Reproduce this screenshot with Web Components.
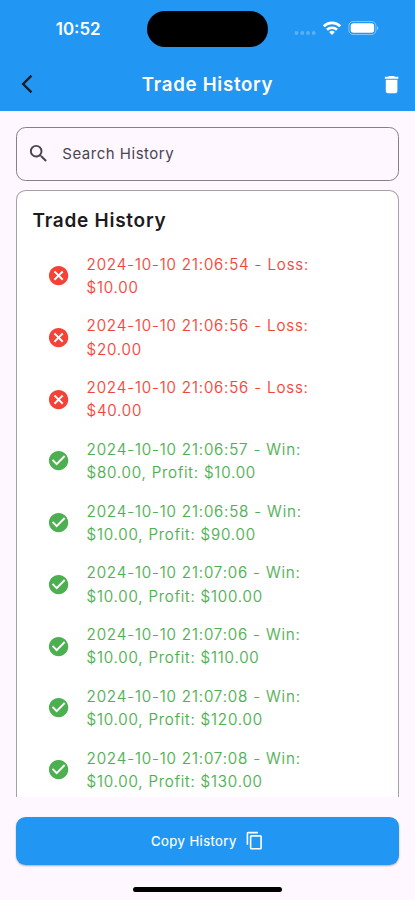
<!DOCTYPE html>
<html lang="en">
<head>
<meta charset="utf-8">
<title>Trade History</title>
<style>
html,body{margin:0;height:100%}
body{font-family:Inter,"Liberation Sans",sans-serif;background:#fef7ff;overflow:hidden}
</style>
</head>
<body>
<trade-history-page></trade-history-page>
<script>
const define = (name, html, setup) => customElements.define(name, class extends HTMLElement {
  connectedCallback() {
    if (this.shadowRoot) return;
    const t = document.createElement('template');
    t.innerHTML = html;
    const root = this.attachShadow({ mode: 'open' });
    if (setup) setup(this, t.content);
    root.append(t.content.cloneNode(true));
  }
});

const ICONS = {
  back: 'M17.77 3.77 16 2 6 12l10 10 1.77-1.77L9.54 12z',
  trash: 'M6 19c0 1.100.9 2 2 2h8c1.100 0 2-.9 2-2V7H6v12zM19 4h-3.500l-1-1h-5l-1 1H5v2h14V4z',
  search: 'M15.500 14h-.79l-.28-.27A6.471 6.471 0 0 0 16 9.500 6.500 6.500 0 1 0 9.500 16c1.610 0 3.090-.59 4.230-1.570l.27.28v.79l5 4.990L20.490 19l-4.990-5zm-6 0C7.010 14 5 11.990 5 9.500S7.010 5 9.500 5 14 7.010 14 9.500 11.990 14 9.500 14z',
  loss: 'M12 2C6.470 2 2 6.470 2 12s4.470 10 10 10 10-4.470 10-10S17.530 2 12 2zm5 13.590L15.590 17 12 13.410 8.410 17 7 15.590 10.590 12 7 8.410 8.410 7 12 10.590 15.590 7 17 8.410 13.410 12 17 15.590z',
  win: 'M12 2C6.480 2 2 6.480 2 12s4.480 10 10 10 10-4.480 10-10S17.520 2 12 2zm-2 15-5-5 1.410-1.410L10 14.170l7.590-7.590L19 8l-9 9z',
  copy: 'M16 1H4c-1.100 0-2 .9-2 2v14h2V3h12V1zm3 4H8c-1.100 0-2 .9-2 2v14c0 1.100.9 2 2 2h11c1.100 0 2-.9 2-2V7c0-1.100-.9-2-2-2zm0 16H8V7h11v14z'
};

define('ui-icon', `<style>
:host{display:block;flex:none;width:23.2px;height:23.2px}
svg{display:block;width:100%;height:100%;fill:currentColor}
</style><svg viewBox="0 0 24 24"><path/></svg>`,
(el, content) => content.querySelector('path').setAttribute('d', ICONS[el.getAttribute('name')]));

define('status-bar', `<style>
:host{display:grid;grid-template-columns:147px 121px 1fr;height:58px;color:#fff}
.time{padding:18.500px 0 0 55.800px;font-size:16.900px;font-weight:600;line-height:21px}
.island{height:36px;margin-top:11px;border-radius:18px;background:#000}
svg{display:block;width:147px;height:58px}
</style>
<div class="time">10:52</div><div class="island"></div>
<svg viewBox="268 0 147 58" fill="none">
<g fill="#fff" opacity=".26"><circle cx="296.500" cy="33" r="1.900"/><circle cx="302.300" cy="33" r="1.900"/><circle cx="308" cy="33" r="1.900"/><circle cx="313.700" cy="33" r="1.900"/></g>
<g stroke="#fff" stroke-width="2.700"><path d="M323.700 26.300a11.700 11.700 0 0 1 16.600 0"/><path d="M327 29.800a7.100 7.100 0 0 1 10 0"/></g>
<path fill="#fff" d="M329.100 32.100a4.200 4.200 0 0 1 5.800 0L332 35z"/>
<rect x="348.900" y="21.500" width="27" height="13" rx="4.200" stroke="#fff" stroke-opacity=".45"/>
<rect x="350.700" y="23.300" width="23.400" height="9.400" rx="2.700" fill="#fff"/>
<path d="M377 26.200q1.300.4 1.300 1.900t-1.300 1.900z" fill="#fff" opacity=".5"/>
</svg>`);

define('app-bar', `<style>
:host{display:block;height:111px;background:#2196f3;color:#fff}
.bar{display:grid;grid-template-columns:60px 1fr 60px;align-items:center;height:52.500px}
h1{margin:0;padding-top:2px;text-align:center;font-size:18.700px;font-weight:600;letter-spacing:.7px;line-height:24px}
.back{width:22px;height:22px;margin-left:16px;color:#1d1b20}
.trash{justify-self:end;margin-right:11.800px}
</style>
<status-bar></status-bar>
<div class="bar"><ui-icon class="back" name="back"></ui-icon><h1><slot></slot></h1><ui-icon class="trash" name="trash"></ui-icon></div>`);

define('search-field', `<style>
:host{display:flex;align-items:center;gap:12.300px;box-sizing:border-box;height:54px;padding:0 9.800px .3px;border:1px solid #85808a;border-radius:9.650px;color:#49454f;font-size:15px;letter-spacing:.51px;line-height:23px}
</style><ui-icon name="search"></ui-icon><span><slot></slot></span>`);

define('trade-row', `<style>
:host{display:grid;grid-template-columns:23.200px 1fr;column-gap:15.900px;align-items:center;height:46.300px;color:#4caf50;font-size:15.200px;font-weight:300;-webkit-text-stroke:.2px currentColor;line-height:23.150px;letter-spacing:.84px}
:host([kind=loss]){color:#f44336}
span{display:block;white-space:nowrap}
.amount{letter-spacing:.82px}
</style><ui-icon></ui-icon><div><span><slot></slot></span><span class="amount"><slot name="amount"></slot></span></div>`,
(el, content) => content.querySelector('ui-icon').setAttribute('name', el.getAttribute('kind')));

define('history-card', `<style>
:host{display:block;box-sizing:border-box;overflow:hidden;background:#fff;border:1px solid #a3a3a3;border-bottom:0;border-radius:9.650px 9.650px 0 0;padding:15.200px 16px 0 15.500px}
h2{margin:0;font-size:19px;font-weight:600;letter-spacing:.74px;line-height:27px;color:#1d1b20}
.rows{display:flex;flex-direction:column;gap:15.450px;padding:19.100px 14.900px 0}
</style><h2><slot name="title"></slot></h2><div class="rows"><slot></slot></div>`);

define('copy-button', `<style>
:host{display:flex;align-items:center;justify-content:center;gap:7.900px;height:48.300px;border-radius:9.650px;background:#2196f3;color:#fff;font-size:13.100px;letter-spacing:.42px;font-weight:400;-webkit-text-stroke:.15px currentColor;box-shadow:0 1px 2px rgba(0,0,0,.3)}
ui-icon{width:19.300px;height:19.300px}
</style><span><slot></slot></span><ui-icon name="copy"></ui-icon>`);

define('trade-history-page', `<style>
:host{display:flex;flex-direction:column;width:415px;height:900px;background:#fef7ff}
main{display:flex;flex-direction:column;padding:16px 16px 0}
history-card{height:607px;margin-top:9.400px}
copy-button{margin-top:19.400px}
.home{width:148.500px;height:5px;border-radius:3px;background:#000;margin:22px auto 0}
</style>
<app-bar>Trade History</app-bar>
<main>
<search-field>Search History</search-field>
<history-card><span slot="title">Trade History</span></history-card>
<copy-button>Copy History</copy-button>
</main>
<div class="home"></div>`, (el, content) => {
  const card = content.querySelector('history-card');
  [['loss', '06:54', '$10.00'], ['loss', '06:56', '$20.00'], ['loss', '06:56', '$40.00'],
   ['win', '06:57', '$80.00', '$10.00'], ['win', '06:58', '$10.00', '$90.00'], ['win', '07:06', '$10.00', '$100.00'],
   ['win', '07:06', '$10.00', '$110.00'], ['win', '07:08', '$10.00', '$120.00'], ['win', '07:08', '$10.00', '$130.00']
  ].forEach(([kind, time, amount, profit]) => {
    const row = document.createElement('trade-row');
    row.setAttribute('kind', kind);
    row.textContent = `2024-10-10 21:${time} - ${kind === 'win' ? 'Win' : 'Loss'}:`;
    const value = document.createElement('span');
    value.slot = 'amount';
    value.textContent = profit ? `${amount}, Profit: ${profit}` : amount;
    row.append(value);
    card.append(row);
  });
});
</script>
</body>
</html>
